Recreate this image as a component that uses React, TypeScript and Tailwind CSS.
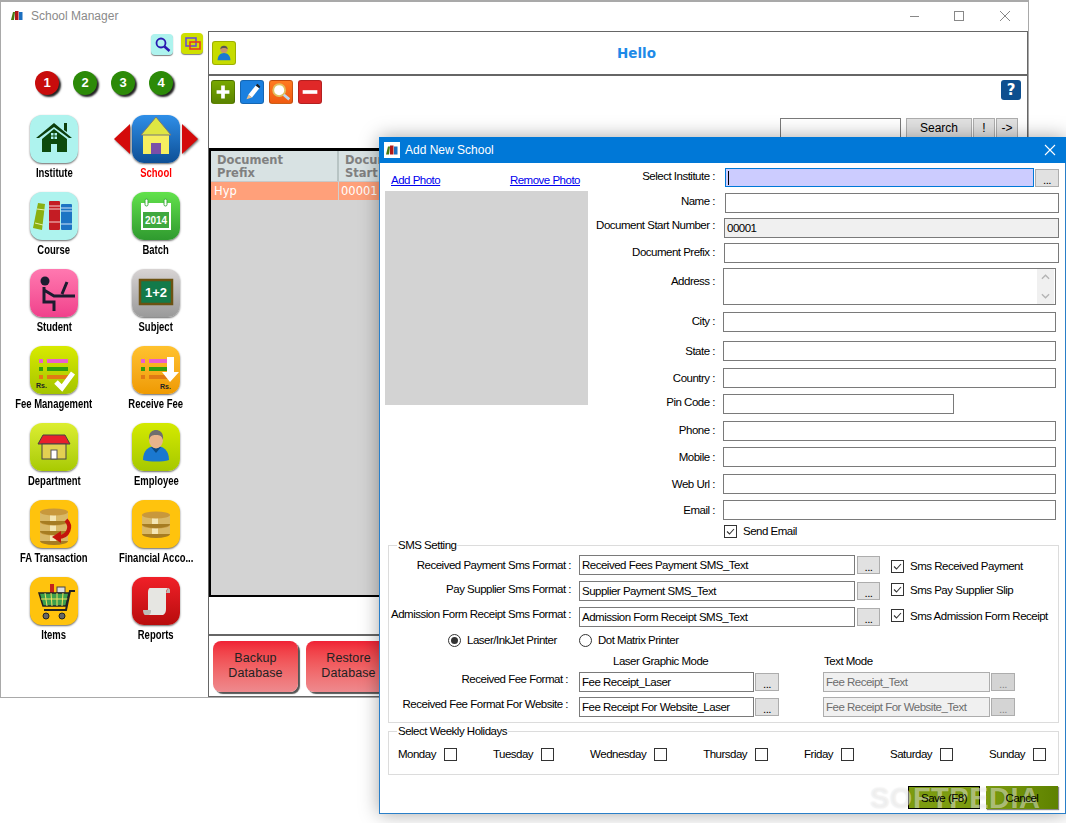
import React from 'react';

const Logo = ({ className }: { className?: string }) => (
  <svg viewBox="0 0 12 9" className={className}>
    <polygon points="0,9 2,1 4,1 3,9" fill="#4a7a10" />
    <rect x="4" y="0" width="3.5" height="9" fill="#b01818" />
    <rect x="8" y="1" width="3.5" height="8" fill="#1b6fc0" />
  </svg>
);

const Svg = ({ children }: { children: React.ReactNode }) => (
  <svg viewBox="0 0 48 48" className="w-12 h-12">{children}</svg>
);

const ListLines = () => (
  <>
    <rect x="9" y="13" width="4" height="4" fill="#e85fd0" />
    <rect x="17" y="13" width="21" height="4" fill="#e85fd0" />
    <rect x="9" y="21" width="4" height="4" fill="#2f9e10" />
    <rect x="17" y="21" width="21" height="4" fill="#2f9e10" />
    <rect x="9" y="29" width="4" height="4" fill="#e07a14" />
    <rect x="17" y="29" width="21" height="4" fill="#e07a14" />
  </>
);

const Coins = ({ y, count }: { y: number; count: number }) => (
  <>
    {Array.from({ length: count })
      .map((_, i) => i)
      .reverse()
      .map((i) => (
        <g key={i}>
          <ellipse cx="24" cy={y + i * 10 + 9} rx="14" ry="4" fill="#a67c22" />
          <rect x="10" y={y + i * 10} width="28" height="9" fill="#d9b866" />
          <rect x="20" y={y + i * 10} width="6" height="9" fill="#f4e6b4" />
          <ellipse cx="24" cy={y + i * 10} rx="14" ry="3.5" fill="#c8983c" />
        </g>
      ))}
  </>
);

const items = [
  {
    label: 'Institute',
    tile: 'bg-[#aef3ee]',
    icon: (
      <Svg>
        <polygon points="34,8 37,8 37,17 34,15" fill="#0d3f0d" />
        <polygon points="24,8 42,23 39,23 24,12 9,23 6,23" fill="#0d3f0d" />
        <polygon points="24,14 37,24 37,37 27,37 27,29 21,29 21,37 12,37 12,24" fill="#0d4a0d" />
        <rect x="21" y="18" width="6" height="6" fill="#aef3ee" />
        <path d="M24 18v6M21 21h6" stroke="#0d4a0d" />
      </Svg>
    ),
  },
  {
    label: 'School',
    active: true,
    tile: 'bg-linear-to-b from-[#2f8fe8] to-[#0d4f96]',
    icon: (
      <Svg>
        <rect x="11" y="20" width="26" height="19" fill="#f5ee60" />
        <polygon points="24,2 39,20 9,20" fill="#dfe642" stroke="#777" />
        <rect x="19" y="28" width="10" height="11" fill="#7a4fa8" />
      </Svg>
    ),
  },
  {
    label: 'Course',
    tile: 'bg-[#aef3ee]',
    icon: (
      <Svg>
        <polygon points="3,36 8,11 15,12 12,38" fill="#8ab010" />
        <path d="M7 17l8 1M5 31l8 2" stroke="#e8f0b0" />
        <rect x="19" y="9" width="11" height="29" rx="1" fill="#c41c24" />
        <path d="M19 14h11M19 17h11M19 30h11" stroke="#f4d0d0" />
        <rect x="31" y="12" width="11" height="26" rx="1" fill="#1c74c4" />
        <path d="M31 16h11M31 19h11M31 32h11" stroke="#cfe4f8" />
      </Svg>
    ),
  },
  {
    label: 'Batch',
    tile: 'bg-linear-to-b from-[#62e24c] to-[#2f9a2f]',
    icon: (
      <Svg>
        <rect x="9" y="11" width="30" height="27" fill="#fff" />
        <rect x="11" y="20" width="26" height="16" fill="#3ea83e" />
        <rect x="13" y="7" width="3" height="7" rx="1.5" fill="#fff" stroke="#3ea83e" />
        <rect x="32" y="7" width="3" height="7" rx="1.5" fill="#fff" stroke="#3ea83e" />
        <text x="24" y="32" textAnchor="middle" fontSize="10" fontWeight="bold" fill="#fff" fontFamily="'Liberation Sans',sans-serif">2014</text>
      </Svg>
    ),
  },
  {
    label: 'Student',
    tile: 'bg-linear-to-b from-[#ff78b0] to-[#f0408c]',
    icon: (
      <Svg>
        <circle cx="15" cy="12" r="4.5" fill="#1c1c30" />
        <path d="M14 18v15h10v9M14 21l10 6h8M24 27h21M32 25l5-12" fill="none" stroke="#1c1c30" strokeWidth="3" />
      </Svg>
    ),
  },
  {
    label: 'Subject',
    tile: 'bg-linear-to-b from-[#d8d4d4] to-[#9a9a9a]',
    icon: (
      <Svg>
        <rect x="8" y="11" width="32" height="24" fill="#137a4a" stroke="#6b5212" strokeWidth="2.5" />
        <text x="24" y="28" textAnchor="middle" fontSize="13" fontWeight="bold" fill="#fff" fontFamily="'Liberation Sans',sans-serif">1+2</text>
      </Svg>
    ),
  },
  {
    label: 'Fee Management',
    tile: 'bg-linear-to-b from-[#d8ea00] to-[#a4c400]',
    icon: (
      <Svg>
        <ListLines />
        <text x="6" y="42" fontSize="7" fontWeight="bold" fill="#222" fontFamily="'Liberation Sans',sans-serif">Rs.</text>
        <path d="M26 36l6 6 11-15" fill="none" stroke="#fff" strokeWidth="5" />
      </Svg>
    ),
  },
  {
    label: 'Receive Fee',
    tile: 'bg-linear-to-b from-[#ffc22e] to-[#ef9a00]',
    icon: (
      <Svg>
        <ListLines />
        <polygon points="35,11 42,11 42,26 47,26 38,36 30,26 35,26" fill="#fff" />
        <text x="28" y="43" fontSize="7" fontWeight="bold" fill="#222" fontFamily="'Liberation Sans',sans-serif">Rs.</text>
      </Svg>
    ),
  },
  {
    label: 'Department',
    tile: 'bg-linear-to-b from-[#dcee30] to-[#a8ca00]',
    icon: (
      <Svg>
        <polygon points="13,12 35,12 40,21 8,21" fill="#e8202c" stroke="#444" />
        <rect x="12" y="21" width="24" height="15" fill="#e2d052" stroke="#444" />
        <rect x="21" y="27" width="6" height="9" fill="#fff" stroke="#555" />
      </Svg>
    ),
  },
  {
    label: 'Employee',
    tile: 'bg-linear-to-b from-[#d4ea00] to-[#a6c800]',
    icon: (
      <Svg>
        <path d="M11 37c0-10 6-14 13-14s13 4 13 14c-6 2-20 2-26 0z" fill="#1a78d0" />
        <path d="M19 24l5 6 5-6z" fill="#0c4a80" />
        <ellipse cx="24" cy="17" rx="7" ry="8.5" fill="#e8b48c" />
        <path d="M17 17c-1-8 4-10 7-10s8 2 7 10c-1-4-3-5-7-5s-6 1-7 5z" fill="#6e6e6e" />
      </Svg>
    ),
  },
  {
    label: 'FA Transaction',
    tile: 'bg-[#ffc30d]',
    icon: (
      <Svg>
        <Coins y={12} count={3} />
        <path d="M36 20c6 6 3 17-8 17" fill="none" stroke="#c4140c" strokeWidth="4" />
        <polygon points="22,37 31,31 31,43" fill="#c4140c" />
      </Svg>
    ),
  },
  {
    label: 'Financial Acco...',
    tile: 'bg-[#ffc30d]',
    icon: (
      <Svg>
        <Coins y={15} count={2} />
      </Svg>
    ),
  },
  {
    label: 'Items',
    tile: 'bg-[#ffc30d]',
    icon: (
      <Svg>
        <rect x="20" y="7" width="4" height="9" fill="#c4241c" />
        <rect x="27" y="10" width="8" height="6" fill="#ddd" stroke="#444" />
        <polygon points="9,16 39,16 36,29 13,29" fill="#3ca04c" stroke="#222" strokeWidth="1.5" />
        <path d="M15 16l2 13M21 16l1 13M27 16v13M33 16l-1 13M11 22h27" stroke="#f0e060" />
        <path d="M45 14h-5l-4 19H14" fill="none" stroke="#222" strokeWidth="2" />
        <circle cx="16" cy="39" r="3" fill="#666" stroke="#222" />
        <circle cx="32" cy="39" r="3" fill="#666" stroke="#222" />
      </Svg>
    ),
  },
  {
    label: 'Reports',
    tile: 'bg-linear-to-b from-[#f02028] to-[#b80c0c]',
    icon: (
      <Svg>
        <path d="M18 11h19c-3 0-3 5-3 6v15c0 4-2 6-4 6H12c3-1 4-3 4-6V15c0-2 1-4 2-4z" fill="#e6e6e2" />
        <path d="M34 16h4v-3c0-1-1-2-2-2" fill="#bdbdb8" />
        <path d="M11 33h8c0 2 0 4-2 5h-3c-2 0-3-2-3-5z" fill="#bdbdb8" />
      </Svg>
    ),
  },
];

const Arrow = ({ flip }: { flip?: boolean }) => (
  <svg viewBox="0 0 16 30" className="w-4 h-[30px] drop-shadow-[1px_1px_1px_rgba(0,0,0,0.6)]">
    <polygon points={flip ? '0,0 16,15 0,30' : '16,0 0,15 16,30'} fill="#d40a0a" />
  </svg>
);

const Sidebar = () => (
  <div className="w-[207px] shrink-0 flex flex-col">
    <div className="flex justify-end gap-2 pr-[5px] pt-[2px]">
      <div className="w-[22px] h-[21px] mt-[1px] rounded bg-[#aef3ee] shadow-[0_1px_1px_rgba(0,0,0,0.5)] flex items-center justify-center">
        <svg viewBox="0 0 22 21" className="w-[22px] h-[21px]">
          <circle cx="10" cy="9" r="4.5" fill="none" stroke="#2a1ab0" strokeWidth="1.8" />
          <path d="M13.5 12.5l5 4.5" stroke="#2a1ab0" strokeWidth="2.5" />
        </svg>
      </div>
      <div className="w-[22px] h-[21px] rounded bg-[#cfe000] shadow-[0_1px_1px_rgba(0,0,0,0.5)]">
        <svg viewBox="0 0 22 21" className="w-[22px] h-[21px]">
          <rect x="5" y="5" width="10" height="8" fill="none" stroke="#6a4fd0" strokeWidth="1.6" />
          <rect x="9" y="9" width="10" height="7" fill="none" stroke="#e83a20" strokeWidth="1.6" />
        </svg>
      </div>
    </div>
    <div className="flex gap-[14px] pl-[34px] mt-[16px]">
      {['1', '2', '3', '4'].map((n, i) => (
        <div
          key={n}
          className={`w-6 h-6 rounded-full flex items-center justify-center text-white font-bold text-[13px] shadow-[2px_2px_2px_#222] ${i === 0 ? 'bg-[#c80c0c]' : 'bg-[#2c8a08]'}`}
        >
          {n}
        </div>
      ))}
    </div>
    <div className="grid grid-cols-[102px_102px] auto-rows-[77px] pl-[2px] mt-[20px]">
      {items.map((item) => (
        <div key={item.label} className="flex flex-col items-center">
          <div className="flex items-center gap-[2px]">
            {item.active && <Arrow />}
            <div className={`w-12 h-12 rounded-xl shadow-[0_1px_2px_rgba(0,0,0,0.6)] overflow-hidden ${item.tile}`}>{item.icon}</div>
            {item.active && <Arrow flip />}
          </div>
          <div className={`mt-[3px] text-[12px] leading-[14px] font-bold whitespace-nowrap scale-x-[0.79] ${item.active ? 'text-[#f00]' : 'text-black'}`}>
            {item.label}
          </div>
        </div>
      ))}
    </div>
  </div>
);

const ToolButton = ({ className, children }: { className: string; children: React.ReactNode }) => (
  <div className={`w-6 h-6 rounded-[3px] border border-black/20 ${className}`}>
    <svg viewBox="0 0 24 24" className="w-full h-full">{children}</svg>
  </div>
);

const GreyButton = ({ className, children }: { className: string; children: React.ReactNode }) => (
  <div className={`h-5 bg-[#e1e1e1] border border-[#adadad] flex items-center justify-center text-[12px] ${className}`}>{children}</div>
);

const MainPanel = () => (
  <div className="flex-1 flex flex-col">
    <div className="h-[45px] border border-b-2 border-[#666] flex items-center pl-[3px]">
      <div className="w-6 h-6 rounded-[3px] bg-[#c6dc00] border border-black/20">
        <svg viewBox="0 0 24 24" className="w-full h-full">
          <path d="M5 20c0-5 3-8 7-8s7 3 7 8z" fill="#1a78d0" />
          <circle cx="12" cy="8" r="4" fill="#c8946c" />
          <path d="M8 8c0-3 2-4 4-4s4 1 4 4c-2-2-6-2-8 0z" fill="#555" />
        </svg>
      </div>
      <div className="flex-1 text-center pl-[10px] text-[#1e8ae8] font-bold text-[13.5px] font-['DejaVu_Sans',sans-serif]">Hello</div>
    </div>
    <div className="flex-1 flex flex-col border-r border-l border-[#666]">
      <div className="flex items-center gap-[5px] pl-[2px] pr-[6px] pt-[4px]">
        <ToolButton className="bg-linear-to-b from-[#78a800] to-[#5a8400]">
          <path d="M12 5v14M5 12h14" stroke="#fff" strokeWidth="4" />
        </ToolButton>
        <ToolButton className="bg-[#1a80e0]">
          <polygon points="8,15 16,5 20,8 12,18" fill="#fff" />
          <polygon points="16,5 18,3 21,6 20,8" fill="#222" />
          <polygon points="8,15 12,18 6,20" fill="#e8c090" />
        </ToolButton>
        <ToolButton className="bg-linear-to-b from-[#ff7a20] to-[#f05a10]">
          <circle cx="10" cy="10" r="6.5" fill="#fff" stroke="#e0c060" strokeWidth="2" />
          <path d="M15 15l6 5" stroke="#bcd8f0" strokeWidth="3" />
        </ToolButton>
        <ToolButton className="bg-[#e02828]">
          <path d="M4 12h16" stroke="#fff" strokeWidth="4" />
        </ToolButton>
        <div className="ml-auto mb-[4px] w-5 h-5 rounded-[3px] bg-[#0e4f8f] text-white font-bold text-[15px] leading-5 text-center font-['DejaVu_Sans',sans-serif]">?</div>
      </div>
      <div className="flex justify-end items-center mt-[14px] pr-[9px]">
        <div className="w-[121px] h-5 bg-white border border-[#7a7a7a]" />
        <GreyButton className="w-[66px] ml-[5px]">Search</GreyButton>
        <GreyButton className="w-[22px] ml-[1px]">!</GreyButton>
        <GreyButton className="w-[22px] ml-[1px]">-&gt;</GreyButton>
      </div>
      <div className="h-[449px] mt-[10px] border-2 border-t-[3px] border-black bg-[#d3d3d3] font-['DejaVu_Sans',sans-serif] text-[11.5px] leading-[13px]">
        <div className="flex h-[30px] bg-[#d8e2e3] font-bold text-[#808080]">
          <div className="w-[128px] pl-[6px] pt-[3px] border-r-2 border-[#b8c4c4]">Document<br />Prefix</div>
          <div className="flex-1 pl-[6px] pt-[3px]">Document<br />Start</div>
        </div>
        <div className="flex h-[19px] bg-[#ffa07a] text-white items-center border-t border-[#c8c8c8]">
          <div className="w-[128px] pl-[3px] border-r border-[#d0d0d0] leading-[18px]">Hyp</div>
          <div className="pl-[2px]">00001</div>
        </div>
      </div>
    </div>
    <div className="h-[63px] flex gap-[8px] pl-[4px] pt-[5px] border border-t-2 border-[#666]">
      {[['Backup', 'Database'], ['Restore', 'Database']].map(([a, b]) => (
        <div key={a} className="w-[85px] h-[51px] rounded-lg bg-linear-to-b from-[#f02035] to-[#ee8a8e] shadow-[2px_2px_1px_#555] text-[12.5px] leading-[15px] text-[#222] text-center pt-[10px] tracking-[0.1px]">
          {a}<br />{b}
        </div>
      ))}
    </div>
  </div>
);

const Field = ({ className, children }: { className: string; children?: React.ReactNode }) => (
  <div className={`border border-[#7a7a7a] bg-white pl-[2px] shrink-0 flex items-center whitespace-nowrap ${className}`}>{children}</div>
);

const Dots = ({ className }: { className: string }) => (
  <div className={`h-[18px] shrink-0 bg-[#e1e1e1] border border-[#adadad] text-center leading-[20px] ${className}`}>...</div>
);

const Check = ({ checked }: { checked?: boolean }) => (
  <div className="w-[13px] h-[13px] shrink-0 border border-[#333] bg-white">
    {checked && (
      <svg viewBox="0 0 11 11" className="w-[11px] h-[11px]">
        <path d="M2 5.5l2.5 2.5 4.5-5" fill="none" stroke="#333" strokeWidth="1.1" />
      </svg>
    )}
  </div>
);

const Radio = ({ on }: { on?: boolean }) => (
  <div className="w-[13px] h-[13px] shrink-0 rounded-full border border-[#333] bg-white flex items-center justify-center">
    {on && <div className="w-[7px] h-[7px] rounded-full bg-[#333]" />}
  </div>
);

const formRows = [
  { label: 'Name :', row: 'mt-[6px]', lab: 'pb-[4px]', field: 'ml-[10px] w-[334px] h-5' },
  { label: 'Document Start Number :', row: 'mt-[5px]', lab: 'pb-[6px]', field: 'ml-[9px] w-[335px] h-5 !bg-[#f0f0f0]', value: '00001' },
  { label: 'Document Prefix :', row: 'mt-[5px]', lab: 'pb-[2px]', field: 'ml-[9px] w-[335px] h-5' },
  { label: 'City :', row: 'mt-[7px]', lab: 'pb-[2px]', field: 'ml-[8px] w-[333px] h-5' },
  { label: 'State :', row: 'mt-[9px]', lab: '', field: 'ml-[8px] w-[333px] h-5' },
  { label: 'Country :', row: 'mt-[7px]', lab: '', field: 'ml-[8px] w-[333px] h-5' },
  { label: 'Pin Code :', row: 'mt-[6px]', lab: 'pb-[4px]', field: 'ml-[8px] w-[231px] h-5' },
  { label: 'Phone :', row: 'mt-[7px]', lab: 'pb-[2px]', field: 'ml-[8px] w-[333px] h-5' },
  { label: 'Mobile :', row: 'mt-[6px]', lab: '', field: 'ml-[8px] w-[333px] h-5' },
  { label: 'Web Url :', row: 'mt-[7px]', lab: '', field: 'ml-[8px] w-[333px] h-5' },
  { label: 'Email :', row: 'mt-[6px]', lab: '', field: 'ml-[8px] w-[333px] h-5' },
];

const smsRows = [
  { label: 'Received Payment Sms Format :', lab: '', row: '', box: 'pt-[2px]', value: 'Received Fees Payment SMS_Text', check: 'Sms Received Payment' },
  { label: 'Pay Supplier Sms Format :', lab: 'pb-[4px]', row: 'mt-[6px]', box: 'pb-[3px]', value: 'Supplier Payment SMS_Text', check: 'Sms Pay Supplier Slip' },
  { label: 'Admission Form Receipt Sms Format :', lab: 'pb-[6px]', row: 'mt-[6px]', box: 'pb-[3px]', value: 'Admission Form Receipt SMS_Text', check: 'Sms Admission Form Receipt' },
];

const feeRows = [
  { label: 'Received Fee Format :', row: 'mt-[4px]', laser: 'Fee Receipt_Laser', text: 'Fee Receipt_Text' },
  { label: 'Received Fee Format For Website :', row: 'mt-[5px]', laser: 'Fee Receipt For Website_Laser', text: 'Fee Receipt For Website_Text' },
];

const days = ['Monday', 'Tuesday', 'Wednesday', 'Thursday', 'Friday', 'Saturday', 'Sunday'];

const Dialog = () => (
  <div className="absolute left-[379px] top-[137px] w-[687px] h-[677px] bg-white border border-t-0 border-[#2a7fc8] shadow-[0_0_18px_rgba(0,0,0,0.35)] flex flex-col text-[11.5px] leading-[14px] tracking-[-0.5px] text-black">
    <div className="h-[26px] shrink-0 bg-[#0078d7] flex items-center text-white text-[12px] tracking-normal -mx-[1px]">
      <div className="w-4 h-4 ml-[5px] bg-white flex items-center justify-center">
        <Logo className="w-3 h-[10px]" />
      </div>
      <span className="ml-[5px]">Add New School</span>
      <svg viewBox="0 0 12 12" className="w-3 h-3 ml-auto mr-[10px]">
        <path d="M1 1l10 10M11 1L1 11" stroke="#fff" strokeWidth="1.1" />
      </svg>
    </div>
    <div className="flex">
      <div className="w-[208px] shrink-0 pl-[5px]">
        <div className="flex justify-between pl-[6px] pr-[8px] pt-[10px] h-[28px] text-[#00e] underline w-[203px]">
          <span>Add Photo</span>
          <span>Remove Photo</span>
        </div>
        <div className="w-[203px] h-[214px] bg-[#d3d3d3]" />
      </div>
      <div className="pt-[5px]">
        <div className="flex items-center">
          <div className="w-[127px] shrink-0 text-right whitespace-nowrap pb-[3px]">Select Institute :</div>
          <Field className="ml-[10px] w-[309px] h-[19px] !border-[#0078d7] !bg-[#ccccff]">
            <div className="w-px h-[14px] bg-black" />
          </Field>
          <Dots className="ml-[1px] w-[24px]" />
        </div>
        {formRows.slice(0, 3).map((r) => (
          <div key={r.label} className={`flex items-center ${r.row}`}>
            <div className={`w-[127px] shrink-0 text-right whitespace-nowrap ${r.lab}`}>{r.label}</div>
            <Field className={r.field}>{r.value}</Field>
          </div>
        ))}
        <div className="flex mt-[5px]">
          <div className="w-[127px] shrink-0 text-right pt-[6px]">Address :</div>
          <Field className="ml-[8px] w-[333px] h-[37px] justify-end pr-[1px]">
            <div className="w-[17px] h-[35px] bg-[#f0f0f0] flex flex-col justify-between items-center py-[5px]">
              <svg viewBox="0 0 10 6" className="w-[9px] h-[6px]"><path d="M1 5l4-4 4 4" fill="none" stroke="#b4b4b4" strokeWidth="1.5" /></svg>
              <svg viewBox="0 0 10 6" className="w-[9px] h-[6px]"><path d="M1 1l4 4 4-4" fill="none" stroke="#b4b4b4" strokeWidth="1.5" /></svg>
            </div>
          </Field>
        </div>
        {formRows.slice(3).map((r) => (
          <div key={r.label} className={`flex items-center ${r.row}`}>
            <div className={`w-[127px] shrink-0 text-right whitespace-nowrap ${r.lab}`}>{r.label}</div>
            <Field className={r.field}>{r.value}</Field>
          </div>
        ))}
        <div className="flex items-center gap-[6px] ml-[136px] mt-[4px] h-[14px]">
          <Check checked />
          <span>Send Email</span>
        </div>
      </div>
    </div>
    <div className="relative ml-[8px] mt-[7px] w-[671px] h-[178px] border border-[#dcdcdc] pt-[9px] shrink-0">
      <div className="absolute left-[8px] -top-[8px] bg-white px-[1px] leading-[14px]">SMS Setting</div>
      {smsRows.map((r) => (
        <div key={r.label} className={`flex items-center ${r.row}`}>
          <div className={`w-[182px] shrink-0 text-right whitespace-nowrap ${r.lab}`}>{r.label}</div>
          <Field className="ml-[8px] w-[276px] h-5">{r.value}</Field>
          <Dots className="ml-[2px] w-[23px]" />
          <div className={`flex items-center gap-[6px] ml-[11px] ${r.box}`}>
            <Check checked />
            <span className="whitespace-nowrap">{r.check}</span>
          </div>
        </div>
      ))}
      <div className="flex items-center pl-[59px] mt-[6px] h-[14px]">
        <div className="flex items-center gap-[6px] w-[131px]"><Radio on /><span>Laser/InkJet Printer</span></div>
        <div className="flex items-center gap-[6px]"><Radio /><span>Dot Matrix Printer</span></div>
      </div>
      <div className="flex pl-[224px] mt-[7px] h-[14px] leading-[14px]">
        <div className="w-[211px]">Laser Graphic Mode</div>
        <div>Text Mode</div>
      </div>
      {feeRows.map((r) => (
        <div key={r.label} className={`flex items-center ${r.row}`}>
          <div className="w-[179px] shrink-0 text-right whitespace-nowrap pb-[6px]">{r.label}</div>
          <Field className="ml-[11px] w-[175px] h-5">{r.laser}</Field>
          <Dots className="ml-[1px] w-[24px]" />
          <Field className="ml-[44px] w-[167px] h-5 !border-[#adadad] !bg-[#f0f0f0] text-[#6d6d6d]">{r.text}</Field>
          <Dots className="ml-[1px] w-[24px] !bg-[#d4d4d4] text-[#888]" />
        </div>
      ))}
    </div>
    <div className="relative ml-[8px] mt-[8px] w-[671px] h-[44px] border border-[#dcdcdc] shrink-0 pt-[15px] pl-[9px]">
      <div className="absolute left-[8px] -top-[8px] bg-white px-[1px] leading-[14px]">Select Weekly Holidays</div>
      <div className="flex gap-[36px]">
        {days.map((d) => (
          <div key={d} className="flex items-center gap-[8px]"><span>{d}</span><Check /></div>
        ))}
      </div>
    </div>
    <div className="flex justify-end gap-[6px] mt-[11px] pr-[7px]">
      <div className="w-[72px] h-[23px] bg-[#7c9c10] border border-black flex items-center justify-center"><span className="relative z-10">Save (F8)</span></div>
      <div className="w-[72px] h-[23px] bg-linear-to-r from-[#7c9c10] to-[#5e8200] shadow-[1px_1px_1px_#888] flex items-center justify-center"><span className="relative z-10">Cancel</span></div>
    </div>
    <div className="absolute left-[490px] top-[646px] pointer-events-none text-[29px] leading-[30px] font-bold tracking-[0.5px] text-white/45 [text-shadow:0_0_2px_rgba(0,0,0,0.12)]">SOFTPEDIA</div>
  </div>
);

export default function App() {
  return (
    <div className="relative w-[1066px] h-[823px] bg-white overflow-hidden font-['Liberation_Sans',sans-serif]">
      <div className="absolute left-0 top-0 w-[1029px] h-[698px] border border-[#a9a9a9] border-t-2 flex flex-col">
        <div className="h-[29px] shrink-0 flex items-center pl-[10px] pb-[2px] text-[#8a8a8a] text-[12px]">
          <Logo className="w-3 h-[9px]" />
          <span className="ml-[8px]">School Manager</span>
          <svg viewBox="0 0 100 12" className="ml-auto mr-[18px] w-[100px] h-3">
            <path d="M0 6.5h9" stroke="#888" />
            <rect x="44.5" y="1.5" width="9" height="9" fill="none" stroke="#888" />
            <path d="M90 1l10 10M100 1L90 11" stroke="#888" />
          </svg>
        </div>
        <div className="flex-1 flex">
          <Sidebar />
          <MainPanel />
        </div>
      </div>
      <Dialog />
    </div>
  );
}
